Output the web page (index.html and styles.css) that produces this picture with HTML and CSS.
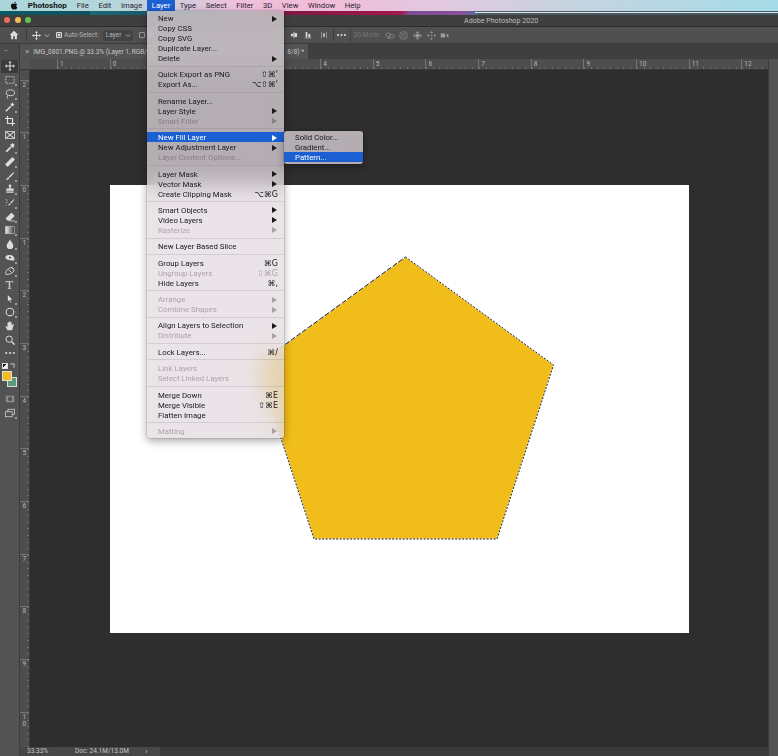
FILE: index.html
```html
<!DOCTYPE html>
<html lang="en">
<head>
<meta charset="utf-8">
<title>Adobe Photoshop 2020</title>
<link rel="stylesheet" href="styles.css">
</head>
<body>
<div class="app">
  <header class="menubar">
    <svg class="apple" viewBox="0 0 12 14"><path d="M9.600 7.400c0-1.500 1.200-2.200 1.300-2.300-.7-1-1.800-1.200-2.200-1.200-.9-.1-1.800.6-2.300.6-.5 0-1.200-.6-2-.6C3.300 3.900 2.300 4.500 1.800 5.400.7 7.300 1.500 10.100 2.600 11.600c.5.800 1.100 1.600 1.900 1.600.8 0 1.100-.5 2-.5s1.200.5 2 .5 1.300-.8 1.800-1.500c.6-.9.8-1.700.8-1.800-.1 0-1.500-.6-1.500-2.500zM8.100 3c.4-.5.700-1.200.6-1.900-.6 0-1.300.4-1.800.9-.4.500-.7 1.200-.6 1.800.7.100 1.400-.3 1.800-.8z"/></svg>
    <span class="mb-item mb-app">Photoshop</span>
    <span class="mb-item">File</span>
    <span class="mb-item">Edit</span>
    <span class="mb-item">Image</span>
    <span class="mb-item mb-active">Layer</span>
    <span class="mb-item">Type</span>
    <span class="mb-item">Select</span>
    <span class="mb-item">Filter</span>
    <span class="mb-item">3D</span>
    <span class="mb-item">View</span>
    <span class="mb-item">Window</span>
    <span class="mb-item">Help</span>
  </header>
  <div class="wall"></div>
  <div class="titlebar">
    <i class="light red"></i><i class="light amber"></i><i class="light green"></i>
    <span class="wintitle">Adobe Photoshop 2020</span>
  </div>

  <div class="options">
    <svg class="op home" viewBox="0 0 12 12"><path d="M6 1 .8 6H2.500V11H5V7.500H7V11H9.500V6H11.200Z"/></svg>
    <i class="op-sep s1"></i>
    <svg class="op mv" viewBox="0 0 12 12"><path d="M6 0 8 2.200H6.600V5.400H9.800V4L12 6 9.800 8V6.600H6.600V9.800H8L6 12 4 9.800H5.400V6.600H2.200V8L0 6 2.200 4V5.400H5.400V2.200H4Z"/></svg>
    <svg class="op chev" viewBox="0 0 8 6"><path d="M1 1.500 4 4.500 7 1.500" fill="none" stroke="#cfcfcf"/></svg>
    <i class="check on"></i>
    <span class="op-label">Auto-Select:</span>
    <span class="select">Layer<svg class="chev2" viewBox="0 0 8 6"><path d="M1 1.500 4 4.500 7 1.500" fill="none" stroke="#bbb"/></svg></span>
    <i class="check"></i>
    <span class="op-label">Sh</span>
    <span class="op-gap"></span>
    <svg class="op al" viewBox="0 0 12 12"><path d="M5.400 1H6.600V11H5.400ZM1.500 4H5V8H1.500ZM7 3H10.500V9H7Z"/></svg>
    <svg class="op al al2" viewBox="0 0 12 12"><path d="M1 10H11V11H1ZM2.500 1.500H5V9.500H2.500ZM6.500 4.500H9.500V9.500H6.500Z"/></svg>
    <svg class="op al al3" viewBox="0 0 12 12"><path d="M2 1H3V11H2ZM9 1H10V11H9ZM4.500 3.500H7.500V9H4.500Z" opacity=".7"/></svg>
    <i class="op-sep s2"></i>
    <svg class="op odots" viewBox="0 0 10 4"><circle cx="1.200" cy="2" r="1.100"/><circle cx="5" cy="2" r="1.100"/><circle cx="8.800" cy="2" r="1.100"/></svg>
    <i class="op-sep s3"></i>
    <span class="op-label dim">3D Mode:</span>
    <svg class="op d3 d3a" viewBox="0 0 14 12"><g fill="none" stroke="#8d8d8d"><ellipse cx="4.500" cy="5" rx="3.500" ry="2.500"/><ellipse cx="9.500" cy="7" rx="3.500" ry="2.500"/><path d="M4 8v2h4"/></g></svg>
    <svg class="op d3" viewBox="0 0 12 12"><g fill="none" stroke="#8d8d8d"><circle cx="6" cy="6" r="5.200"/><circle cx="6" cy="6" r="2.400"/></g></svg>
    <svg class="op d3" viewBox="0 0 12 12"><path fill="#9a9a9a" d="M6 0 8 2.500H4ZM6 12 4 9.500H8ZM0 6 2.500 4V8ZM12 6 9.500 8V4ZM3.500 3.500H8.500V8.500H3.500Z"/></svg>
    <svg class="op d3" viewBox="0 0 12 12"><path fill="#9a9a9a" d="M6 0 8 2.500H4ZM6 12 4 9.500H8ZM0 6 2.500 4V8ZM12 6 9.500 8V4ZM5 5H7V7H5Z"/></svg>
    <svg class="op d3" viewBox="0 0 14 12"><path fill="#9a9a9a" d="M1 3H8V9H1ZM13 2.500 9.500 5.500V6.500L13 9.500" /></svg>
  </div>

  <div class="work">
    <aside class="toolbar">
      <div class="grip">••</div>
      <div class="tool active"><svg viewBox="0 0 12 12"><path d="M6 0 8 2.200H6.600V5.400H9.800V4L12 6 9.800 8V6.600H6.600V9.800H8L6 12 4 9.800H5.400V6.600H2.200V8L0 6 2.200 4V5.400H5.400V2.200H4Z"/></svg></div>
      <div class="tool more"><svg viewBox="0 0 12 12"><rect x="1" y="2" width="10" height="8" fill="none" stroke="#cfcfcf" stroke-dasharray="2 1.200"/></svg></div>
      <div class="tool more"><svg viewBox="0 0 12 12"><g fill="none" stroke="#d8d8d8" stroke-width="1.100"><ellipse cx="6.500" cy="4.500" rx="5" ry="3.500"/><path d="M3.500 7.500C2 9 3.500 10 3 11.500"/></g></svg></div>
      <div class="tool more"><svg viewBox="0 0 12 12"><path d="M1 11 7 5" stroke="#e0e0e0" stroke-width="1.800"/><path d="M9 0 9.600 2 11.600 2.400 10 3.600 10.400 5.600 8.700 4.500 7 5.400 7.400 3.500 6 2.200 8.100 2Z"/></svg></div>
      <div class="tool"><svg viewBox="0 0 12 12"><path d="M3 0V9H12M0 3H9V12" fill="none" stroke="#e0e0e0" stroke-width="1.400"/></svg></div>
      <div class="tool"><svg viewBox="0 0 12 12"><rect x=".7" y="1.700" width="10.600" height="8.600" fill="none" stroke="#d8d8d8"/><path d="M1 2 11 10M11 2 1 10" stroke="#d8d8d8" stroke-width="1.300"/></svg></div>
      <div class="tool more"><svg viewBox="0 0 12 12"><path d="M1 11 1.200 9.300 6.500 4 8 5.500 2.700 10.800Z"/><path d="M6 2.500 8.500.5C9.500-.2 12 2.300 11.400 3.400L9.500 6Z"/></svg></div>
      <div class="tool more"><svg viewBox="0 0 12 12"><path d="M.8 8 8 .8C8.600.2 9.300.2 9.800.8L11.200 2.200C11.800 2.800 11.800 3.400 11.200 4L4 11.200C3.400 11.800 2.800 11.800 2.200 11.200L.8 9.800C.2 9.200.2 8.600.8 8Z"/></svg></div>
      <div class="tool more"><svg viewBox="0 0 12 12"><path d="M11.500.5C9 2 6 5 4.500 7L5.500 8C7.500 6.500 10.500 3.500 11.500.5ZM4 7.600C2.500 7.800 2.500 9.500 1 10.500 3 11 5 10 5 8.500Z"/></svg></div>
      <div class="tool more"><svg viewBox="0 0 12 12"><path d="M4.500 1.500C4.500.4 7.500.4 7.500 1.500 7.500 3 6.800 3.500 6.800 5.500H10.500V8H1.500V5.500H5.200C5.200 3.500 4.500 3 4.500 1.500ZM1.500 9H10.500V10.500H1.500Z"/></svg></div>
      <div class="tool more"><svg viewBox="0 0 12 12"><path d="M11.500.5C9.500 2 7.500 4 6 6L7 7C9 5.500 10.500 3 11.500.5ZM5.500 6.600C4.500 6.800 4.500 8 3.500 8.800 5 9.200 6.500 8.500 6.500 7.500Z"/><path d="M1 1.500 3 3M1 5 2.500 5.500M1 9 2 8" stroke="#d8d8d8"/></svg></div>
      <div class="tool more"><svg viewBox="0 0 12 12"><path d="M1 7.500 7 1.500C7.500 1 8 1 8.500 1.500L11 4C11.500 4.500 11.500 5 11 5.500L6 10.500H3.500L1 8.500C.7 8.200.7 7.800 1 7.500Z"/><path d="M6 10.800H11.500" stroke="#d8d8d8"/></svg></div>
      <div class="tool more"><svg viewBox="0 0 12 12"><defs><linearGradient id="grad"><stop offset="0" stop-color="#f2f2f2"/><stop offset="1" stop-color="#3a3a3a"/></linearGradient></defs><rect x=".5" y="1.500" width="11" height="9" fill="url(#grad)" stroke="#bdbdbd" stroke-width=".7"/></svg></div>
      <div class="tool more"><svg viewBox="0 0 12 12"><path d="M6 .5C7 3 10 5 10 8A4 4 0 0 1 2 8C2 5 5 3 6 .5Z"/></svg></div>
      <div class="tool more"><svg viewBox="0 0 12 12"><path d="M.5 5C.5 3 3 2.500 6 2.500 9 2.500 11.500 5 11.500 7.500 11.500 9 10 9.500 8.500 9 6 8.500 .5 8 .5 5Z"/><circle cx="6" cy="5.500" r="1.300" fill="#535353"/></svg></div>
      <div class="tool more"><svg viewBox="0 0 12 12"><g fill="none" stroke="#d8d8d8" stroke-width="1.100"><path d="M1 10C0 7 3 2.500 7 2 10 1.500 11.500 4 10.500 6 9 9 5 10.500 1 10Z"/><path d="M4 4 8 8M7 1 10 4"/></g></svg></div>
      <div class="tool ttool">T</div>
      <div class="tool more"><svg viewBox="0 0 12 12"><path d="M3 .5 9.500 7 6.800 7.200 8.200 10.500 6.800 11.200 5.300 7.800 3 9.500Z" stroke="#222" stroke-width=".5"/></svg></div>
      <div class="tool more"><svg viewBox="0 0 12 12"><circle cx="6" cy="6" r="4.600" fill="none" stroke="#d8d8d8" stroke-width="1.300"/></svg></div>
      <div class="tool"><svg viewBox="0 0 12 12"><path d="M3 11 .8 6.800C.4 6 1.500 5.500 2 6.200L3 7.500V2.500C3 1.700 4.200 1.700 4.200 2.500V5.500V1.500C4.200.7 5.500.7 5.500 1.500V5.500V1.200C5.500.4 6.800.4 6.800 1.200V5.500V2C6.800 1.300 8 1.300 8 2V5.800L9.300 4C9.900 3.300 10.900 3.800 10.500 4.600L8.500 11Z"/></svg></div>
      <div class="tool"><svg viewBox="0 0 12 12"><g fill="none" stroke="#d8d8d8"><circle cx="5" cy="5" r="3.800" stroke-width="1.200"/><path d="M8 8 11.500 11.500" stroke-width="1.800"/></g></svg></div>
      <div class="tool"><svg viewBox="0 0 10 4" class="tdots"><circle cx="1.200" cy="2" r="1.100"/><circle cx="5" cy="2" r="1.100"/><circle cx="8.800" cy="2" r="1.100"/></svg></div>
      <div class="tool colors-mini"><i class="mini"></i><svg class="swap" viewBox="0 0 6 6"><path d="M1 2V1H5V5H4" fill="none" stroke="#d0d0d0"/></svg></div>
      <div class="swatches"><i class="sw bg"></i><i class="sw fg"></i></div>
      <div class="tool qm"><svg viewBox="0 0 12 12"><rect x="1" y="2" width="10" height="8" fill="#8c8c8c"/><circle cx="6" cy="6" r="2.600" fill="#535353"/></svg></div>
      <div class="tool more"><svg viewBox="0 0 12 12"><g fill="#535353" stroke="#d8d8d8" stroke-width=".9"><rect x="3.500" y="1.500" width="8" height="6"/><rect x=".6" y="4.500" width="8" height="6"/></g></svg></div>
    </aside>

    <div class="main">
      <div class="tabs">
        <div class="tab"><span class="tab-close">×</span><span class="tab-name">IMG_0801.PNG @ 33.3% (Layer 1, RGB/</span><span class="tab-tail">8/8) *</span></div>
      </div>
      <div class="body">
        <div class="docarea">
          <div class="ruler-h">
            <i class="corner"></i>
            <span class="rh first">1</span><span class="rh">0</span><span class="rh"></span><span class="rh"></span><span class="rh"></span><span class="rh">4</span><span class="rh">5</span><span class="rh">6</span><span class="rh">7</span><span class="rh">8</span><span class="rh">9</span><span class="rh">10</span><span class="rh">11</span><span class="rh">12</span>
          </div>
          <div class="mid">
            <div class="ruler-v">
              <span class="rv">2</span><span class="rv">1</span><span class="rv">0</span><span class="rv">1</span><span class="rv">2</span><span class="rv">3</span><span class="rv">4</span><span class="rv">5</span><span class="rv">6</span><span class="rv">7</span><span class="rv">8</span><span class="rv">9</span><span class="rv">1<br>0</span>
            </div>
            <div class="canvas">
              <div class="doc">
                <svg class="shape" viewBox="0 0 579 448"><polygon points="295.500,72 443.500,180 387,354 204,354 147,180" fill="#f0bd1a"/><polygon points="295.500,72 443.500,180 387,354 204,354 147,180" fill="none" stroke="#fff" stroke-width="1"/><polygon points="295.500,72 443.500,180 387,354 204,354 147,180" fill="none" stroke="#1c1c1c" stroke-width="1" stroke-dasharray="2 1.500"/><path d="M147 180 295.500 72" fill="none" stroke="#fff" stroke-width="1"/><path d="M147 180 295.500 72" fill="none" stroke="#222" stroke-width="1" stroke-dasharray="5 2"/></svg>
              </div>
            </div>
          </div>
          <div class="status"><span class="st-zoom">33.33%</span><span class="st-doc">Doc: 24.1M/13.0M</span><span class="st-more">›</span></div>
        </div>
        <div class="dock"></div>
      </div>
    </div>
  </div>

  <nav class="menu">
    <div class="row sub">New</div>
    <div class="row">Copy CSS</div>
    <div class="row">Copy SVG</div>
    <div class="row">Duplicate Layer...</div>
    <div class="row sub">Delete</div>
    <hr>
    <div class="row">Quick Export as PNG<kbd>⇧⌘'</kbd></div>
    <div class="row">Export As...<kbd>⌥⇧⌘'</kbd></div>
    <hr>
    <div class="row">Rename Layer...</div>
    <div class="row sub">Layer Style</div>
    <div class="row sub off">Smart Filter</div>
    <hr>
    <div class="row sub hi">New Fill Layer</div>
    <div class="row sub">New Adjustment Layer</div>
    <div class="row off">Layer Content Options...</div>
    <hr>
    <div class="row sub">Layer Mask</div>
    <div class="row sub">Vector Mask</div>
    <div class="row">Create Clipping Mask<kbd>⌥⌘G</kbd></div>
    <hr>
    <div class="row sub">Smart Objects</div>
    <div class="row sub">Video Layers</div>
    <div class="row sub off">Rasterize</div>
    <hr>
    <div class="row">New Layer Based Slice</div>
    <hr>
    <div class="row">Group Layers<kbd>⌘G</kbd></div>
    <div class="row off">Ungroup Layers<kbd>⇧⌘G</kbd></div>
    <div class="row">Hide Layers<kbd>⌘,</kbd></div>
    <hr>
    <div class="row sub off">Arrange</div>
    <div class="row sub off">Combine Shapes</div>
    <hr>
    <div class="row sub">Align Layers to Selection</div>
    <div class="row sub off">Distribute</div>
    <hr>
    <div class="row">Lock Layers...<kbd>⌘/</kbd></div>
    <hr>
    <div class="row off">Link Layers</div>
    <div class="row off">Select Linked Layers</div>
    <hr>
    <div class="row">Merge Down<kbd>⌘E</kbd></div>
    <div class="row">Merge Visible<kbd>⇧⌘E</kbd></div>
    <div class="row">Flatten Image</div>
    <hr>
    <div class="row sub off">Matting</div>
  </nav>
  <nav class="submenu">
    <div class="row">Solid Color...</div>
    <div class="row">Gradient...</div>
    <div class="row hi">Pattern...</div>
  </nav>
</div>
</body>
</html>
```

FILE: styles.css
```css
* { box-sizing: border-box; }
html, body { margin: 0; padding: 0; background: #2e2e2e; }
.app {
  position: relative;
  width: 778px;
  height: 756px;
  overflow: hidden;
  display: flex;
  flex-direction: column;
  background: #2e2e2e;
  font-family: Roboto, "Liberation Sans", "DejaVu Sans", sans-serif;
  filter: blur(0.4px);
}

/* mac menu bar */
.menubar {
  height: 11px;
  flex: none;
  display: flex;
  align-items: center;
  padding-left: 10px;
  font-size: 7.650px;
  color: #2a2030;
  background: linear-gradient(90deg, #a9d6da 0, #b6d6dc 120px, #f0c0dc 240px, #f2bcd8 320px, #e2c8e0 440px, #c4d4e0 580px, #a4dce8 778px);
}
.apple { width: 8px; height: 9px; fill: #111; margin-right: 5px; }
.mb-item { padding: 0 4.800px; line-height: 12px; height: 11px; white-space: nowrap; }
.mb-app { font-size: 8px; font-weight: 700; color: #111; margin-right: .5px; }
.mb-active { background: #1b5fd2; color: #fff; }

.wall {
  height: 4px;
  flex: none;
  background:
    linear-gradient(90deg, transparent 0, transparent 475px, #e8e8e8 475px, #e8e8e8 778px) 0 1px / 100% 1px no-repeat,
    linear-gradient(90deg, #0c5a66 0, #10505e 90px, #1a6a76 90px, #174a5c 200px, #7c1a44 280px, #a3174e 400px, #7c4f90 410px, #86509a 460px, #5a6c98 475px, #4a5a66 480px, #3f5a66 778px);
}

.titlebar {
  height: 12px;
  flex: none;
  display: flex;
  align-items: center;
  gap: 4.700px;
  padding: 0 0 2px 4px;
  background: #3f3f3f;
  border-bottom: 1px solid #2c2c2c;
}
.light { width: 6px; height: 6px; border-radius: 50%; }
.red { background: #ed6a5e; }
.amber { background: #f4bf4f; }
.green { background: #61c554; }
.wintitle { margin: 0 0 0 428px; font-size: 7.100px; color: #bcbcbc; line-height: 11px; position: relative; top: 1px; }

/* options bar */
.options {
  height: 17px;
  flex: none;
  display: flex;
  align-items: center;
  background: #505050;
  border-bottom: 1px solid #3a3a3a;
  color: #c4c4c4;
  font-size: 6.500px;
}
.op { width: 9px; height: 9px; fill: #dcdcdc; flex: none; }
.home { margin-left: 9px; width: 10px; height: 10px; }
.op-sep { width: 1px; height: 13px; background: #3d3d3d; flex: none; }
.s1 { margin-left: 7px; }
.mv { margin-left: 5px; }
.chev { width: 6px; height: 5px; margin-left: 3px; }
.check { width: 6px; height: 6px; border: 1px solid #9a9a9a; border-radius: 1px; flex: none; margin-left: 6px; }
.check.on { background: #dcdcdc; border-color: #dcdcdc; box-shadow: inset 0 0 0 1px #777; }
.op-label { margin-left: 2px; white-space: nowrap; color: #b4b4b4; }
.select { margin-left: 4px; width: 30px; height: 11px; padding-left: 3px; display: flex; align-items: center; justify-content: space-between; background: #434343; border-radius: 2px; color: #b4b4b4; }
.chev2 { width: 6px; height: 5px; margin-right: 2px; }
.op-gap { width: 136px; flex: none; }
.al { width: 8px; height: 8px; }
.al2 { margin-left: 6px; }
.al3 { margin-left: 8px; }
.s2 { margin-left: 5px; }
.odots { margin-left: 3px; width: 9px; height: 4px; fill: #e2e2e2; }
.s3 { margin-left: 4px; }
.dim { color: #767676; }
.d3 { width: 9px; height: 9px; margin-left: 4.600px; }
.d3a { margin-left: 4px; width: 10px; }

.work { flex: 1; min-height: 0; display: flex; }

/* tools */
.toolbar {
  width: 20px;
  flex: none;
  background: #535353;
  border-right: 1px solid #3c3c3c;
  display: flex;
  flex-direction: column;
}
.grip { height: 15.500px; font-size: 5px; line-height: 14px; color: #aaa; padding-left: 4px; background: #4a4a4a; }
.tool {
  position: relative;
  height: 13.680px;
  flex: none;
  display: flex;
  align-items: center;
  justify-content: center;
}
.tool svg { width: 10px; height: 10px; fill: #dcdcdc; }
.tool.more::after {
  content: "";
  position: absolute;
  right: 2px;
  bottom: 1px;
  width: 2px;
  height: 2px;
  background: #9c9c9c;
}
.active { margin: 0 1px; background: #3b3b3b; border-radius: 1px; }
.ttool { font-family: "Liberation Serif", serif; font-size: 12px; color: #e0e0e0; }
.tool svg.tdots { height: 4px; }
.colors-mini { justify-content: space-between; padding: 0 4px 0 2px; height: 11px; }
.colors-mini svg.swap { width: 5px; height: 5px; }
.mini { width: 6px; height: 6px; background: linear-gradient(135deg, #111 50%, #eee 50%); border: 1px solid #ddd; }
.swatches { height: 19px; display: grid; flex: none; margin-bottom: 2px; }
.sw { grid-area: 1 / 1; display: block; }
.fg { width: 10px; height: 10px; margin: 0 0 0 2px; background: #f2bd1d; border: 1px solid #ddd; }
.bg { width: 10px; height: 10px; margin: 6px 0 0 7px; background: #5d9a78; border: 1px solid #ddd; }
.qm svg { width: 10px; height: 10px; }

/* main area */
.main { flex: 1; min-width: 0; display: flex; flex-direction: column; }
.tabs { height: 15px; flex: none; background: #3f3f3f; }
.tab {
  width: 288px;
  height: 15px;
  padding-left: 5px;
  display: flex;
  align-items: center;
  background: #535353;
  font-size: 6.500px;
  color: #c8c8c8;
  white-space: nowrap;
}
.tab-close { margin-right: 4px; font-size: 8px; color: #aaa; }
.tab-tail { margin-left: auto; margin-right: 4px; }
.body { flex: 1; min-height: 0; display: flex; }
.docarea { flex: 1; min-width: 0; display: flex; flex-direction: column; }
.dock { width: 10px; flex: none; background: #535353; border-left: 1px solid #3c3c3c; }

.ruler-h {
  height: 11px;
  flex: none;
  display: flex;
  overflow: hidden;
  background: #4d4d4d;
  border-bottom: 1px solid #383838;
}
.corner { width: 10px; flex: none; background: #535353; }
.rh {
  width: 52.650px;
  flex: none;
  font-size: 6.500px;
  line-height: 11px;
  padding-left: 2px;
  color: #b8b8b8;
  border-left: 1px solid #747474;
  background: repeating-linear-gradient(90deg, #6e6e6e 0, #6e6e6e 1px, transparent 1px, transparent 6.580px) 0 100% / 100% 2px no-repeat;
}
.first { margin-left: 27px; }
.mid { flex: 1; min-height: 0; display: flex; }
.ruler-v {
  width: 10px;
  flex: none;
  overflow: hidden;
  padding-top: 9.600px;
  background: #4d4d4d;
  border-right: 1px solid #383838;
}
.rv {
  display: block;
  height: 52.700px;
  font-size: 6.500px;
  line-height: 7px;
  padding: 1px 0 0 2.500px;
  color: #b8b8b8;
  border-top: 1px solid #747474;
  background: repeating-linear-gradient(180deg, #6e6e6e 0, #6e6e6e 1px, transparent 1px, transparent 6.590px) 100% 0 / 2px 100% no-repeat;
}
.canvas { flex: 1; min-height: 0; overflow: hidden; padding: 115px 0 0 80px; background: #2e2e2e; }
.doc { width: 579px; height: 448px; background: #fff; }
.shape { display: block; width: 579px; height: 448px; }

.status {
  height: 9px;
  flex: none;
  display: flex;
  align-items: center;
  background: #3a3a3a;
  font-size: 6.500px;
  color: #c4c4c4;
}
.st-zoom { width: 48px; padding-left: 7px; background: #474747; line-height: 9px; }
.st-doc { width: 77px; padding-left: 7px; background: #474747; line-height: 9px; white-space: nowrap; }
.st-more { width: 15px; line-height: 9px; background: #474747; font-size: 8px; }

/* menus */
.menu, .submenu {
  position: absolute;
  background: rgba(226, 218, 224, 0.74);
  backdrop-filter: blur(11px);
  color: #1b171c;
  font-size: 7.800px;
  border-radius: 0 0 3px 3px;
  box-shadow: 0 3px 8px rgba(0, 0, 0, .35), 0 0 0 .5px rgba(0, 0, 0, .2);
}
.menu { left: 147px; top: 11px; width: 137px; padding: 2px 0; }
.submenu { left: 284px; top: 131px; width: 79px; padding: 1px 0 2px; border-radius: 3px; }
.row {
  position: relative;
  height: 10px;
  line-height: 11.500px;
  padding: 0 6px 0 11px;
  display: flex;
  justify-content: space-between;
  white-space: nowrap;
}
.sub::after {
  content: "";
  position: absolute;
  right: 7px;
  top: 2.500px;
  border-left: 5px solid #1b171c;
  border-top: 3px solid transparent;
  border-bottom: 3px solid transparent;
}
.off { color: rgba(60, 50, 60, .38); }
.sub.off::after { border-left-color: rgba(60, 50, 60, .38); }
.hi { background: #1b5fd2; color: #fff; }
.sub.hi::after { border-left-color: #fff; }
.menu hr { margin: 2.700px 0; height: 1px; border: 0; background: rgba(120, 110, 120, .2); }
.menu kbd { font-family: "DejaVu Sans", Roboto, sans-serif; font-size: 8px; }
```
